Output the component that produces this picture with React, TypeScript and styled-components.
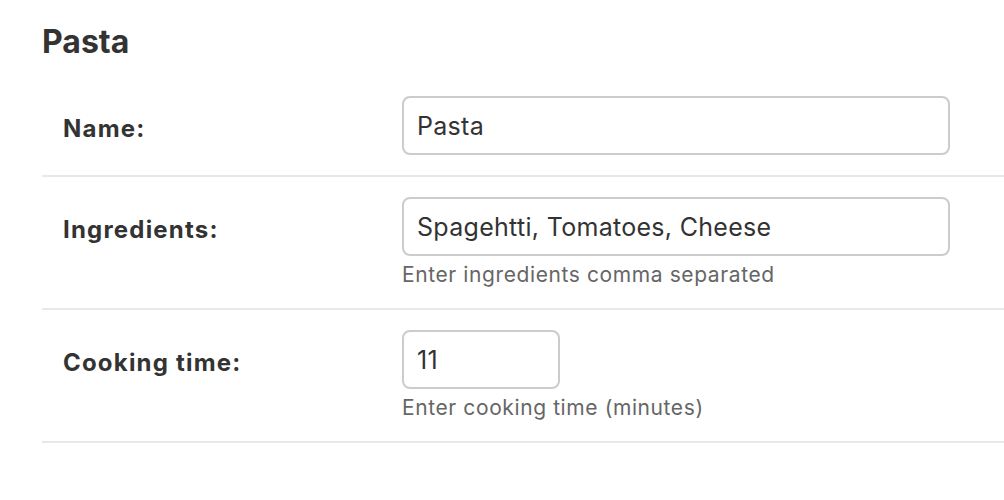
import React from "react";
import styled, { createGlobalStyle } from "styled-components";

const Global = createGlobalStyle`
  html, body { margin: 0; padding: 0; background: #fff; }
  body { font-family: Inter, "Liberation Sans", sans-serif; color: #333; }
`;

const Page = styled.div`
  padding: 23px 0 0 42px;
`;

const Title = styled.h2`
  margin: 0 0 15px 0;
  font-size: 32px;
  font-weight: 700;
  line-height: 38px;
  color: #333;
`;

const Row = styled.div`
  display: grid;
  grid-template-columns: 339px 1fr;
  align-items: start;
  padding: 20px 0 20px 21px;
  border-bottom: 2px solid #e8e8e8;
`;

const Label = styled.label`
  padding-top: 6px;
  font-size: 24px;
  font-weight: 700;
  letter-spacing: 1.2px;
  line-height: 53px;
  color: #333;
`;

const Field = styled.div`
  display: flex;
  flex-direction: column;
  align-items: flex-start;
`;

const Input = styled.input<{ $w: number }>`
  box-sizing: border-box;
  width: ${(p) => p.$w}px;
  height: 59px;
  border: 2px solid #ccc;
  border-radius: 8px;
  padding: 0 13px;
  font-family: Inter, "Liberation Sans", sans-serif;
  font-size: 25px;
  letter-spacing: 0.3px;
  color: #333;
  background: #fff;
  outline: none;
`;

const Help = styled.div`
  margin-top: 5px;
  margin-bottom: -1px;
  font-size: 21px;
  letter-spacing: 0.6px;
  line-height: 28px;
  color: #666;
`;

export default function App() {
  return (
    <>
      <Global />
      <Page>
        <Title>Pasta</Title>
        <Row>
          <Label>Name:</Label>
          <Field>
            <Input $w={548} defaultValue="Pasta" />
          </Field>
        </Row>
        <Row>
          <Label>Ingredients:</Label>
          <Field>
            <Input $w={548} defaultValue="Spagehtti, Tomatoes, Cheese" />
            <Help>Enter ingredients comma separated</Help>
          </Field>
        </Row>
        <Row>
          <Label>Cooking time:</Label>
          <Field>
            <Input $w={158} defaultValue="11" />
            <Help>Enter cooking time (minutes)</Help>
          </Field>
        </Row>
      </Page>
    </>
  );
}
